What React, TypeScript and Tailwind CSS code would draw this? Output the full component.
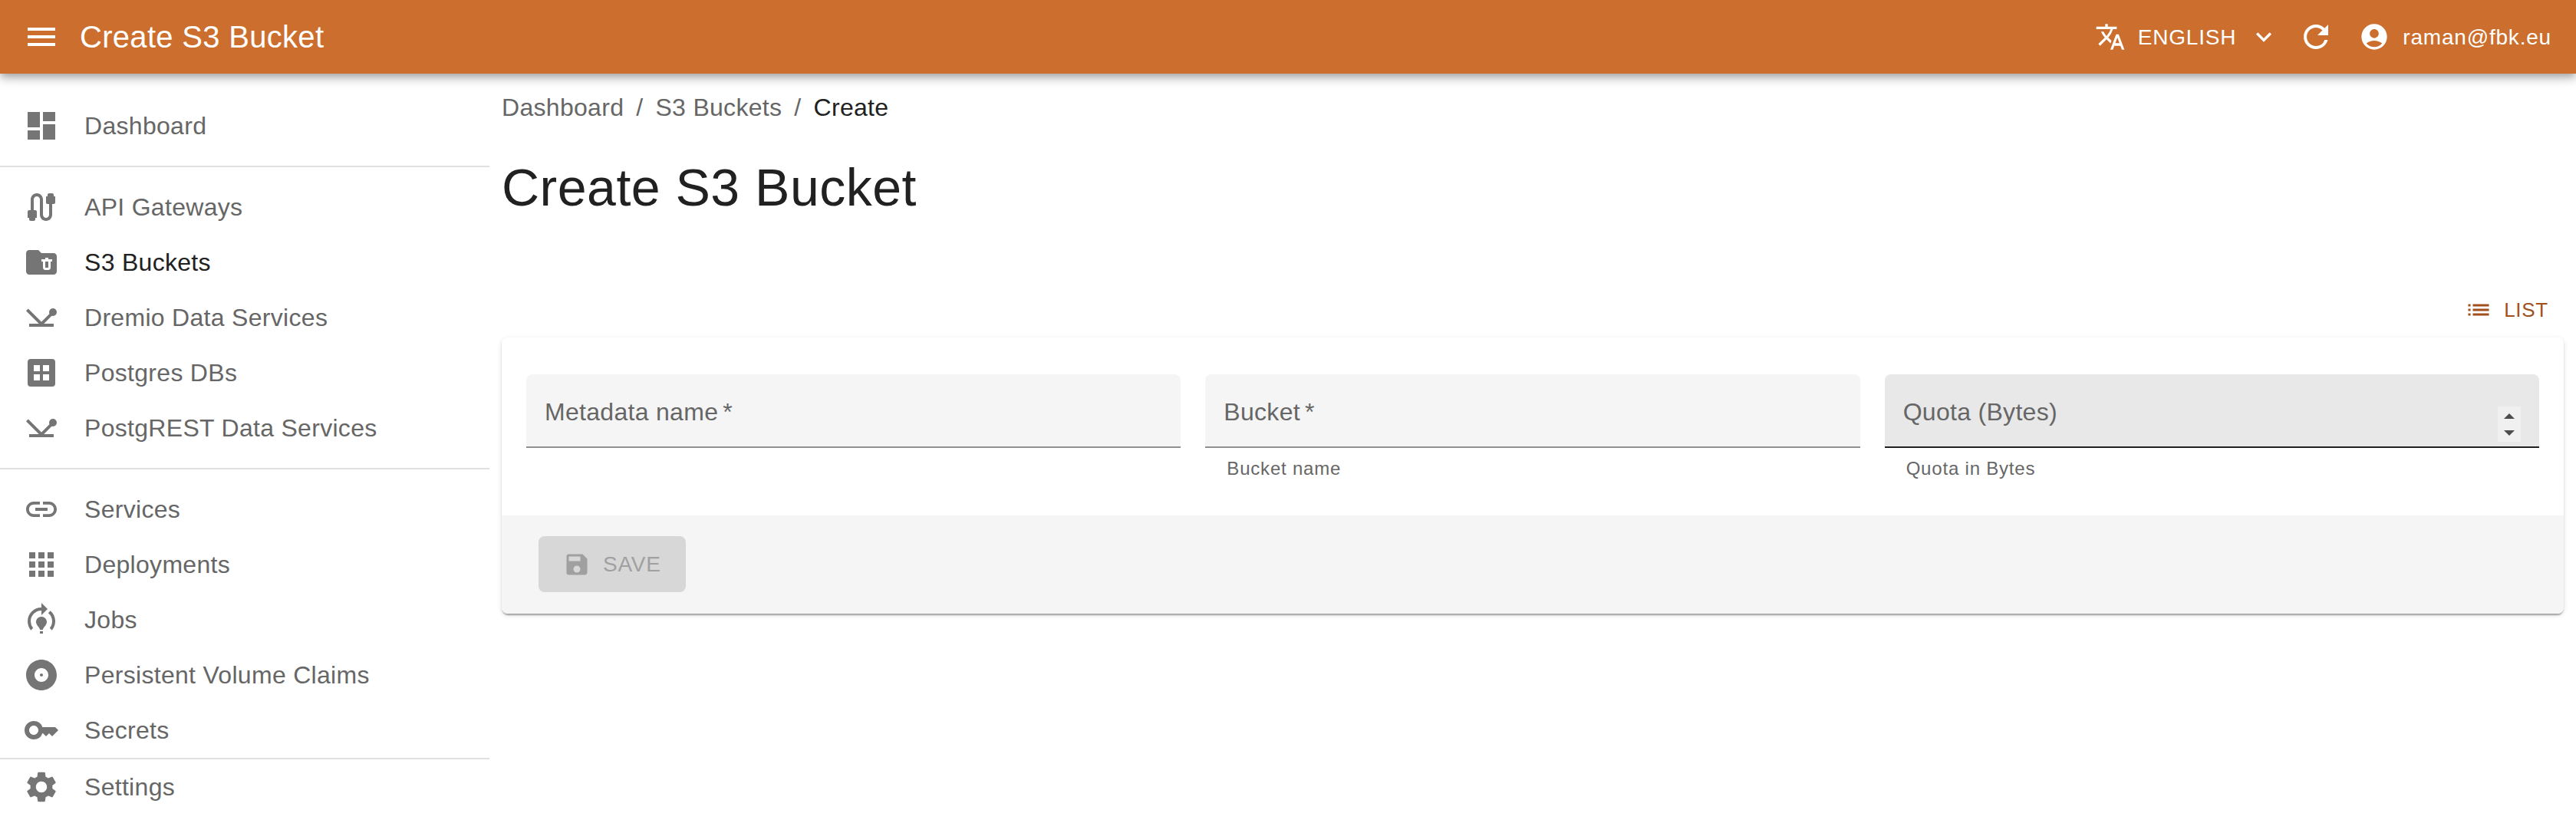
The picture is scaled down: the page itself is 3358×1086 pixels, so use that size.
import type { ComponentType, ReactNode } from 'react';
import {
  MdAccountCircle,
  MdAlbum,
  MdApps,
  MdCable,
  MdDashboard,
  MdExpandMore,
  MdFolderDelete,
  MdKey,
  MdLink,
  MdList,
  MdMenu,
  MdModelTraining,
  MdRefresh,
  MdSave,
  MdSettings,
  MdTranslate,
} from 'react-icons/md';

type Icon = ComponentType<{ className?: string }>;

const DataServiceIcon: Icon = ({ className }) => (
  <svg viewBox="0 0 24 24" fill="none" stroke="currentColor" strokeWidth="2" className={className}>
    <path d="M2.7 6.9 12 16.2l7-7" />
    <path d="M4 17h16" />
    <circle cx="19.5" cy="8.5" r="2.5" fill="currentColor" stroke="none" />
  </svg>
);

const DatabaseIcon: Icon = ({ className }) => (
  <svg viewBox="0 0 24 24" fill="currentColor" fillRule="evenodd" className={className}>
    <path d="M5 3h14a2 2 0 0 1 2 2v14a2 2 0 0 1-2 2H5a2 2 0 0 1-2-2V5a2 2 0 0 1 2-2zM7 7v4h4V7zM13 7v4h4V7zM7 13v4h4v-4zM13 13v4h4v-4z" />
  </svg>
);

function MenuItem({ icon: I, label, active }: { icon: Icon; label: string; active?: boolean }) {
  return (
    <a className={`flex h-[72px] items-center pl-[30px] ${active ? 'text-[#212121]' : 'text-[#666666]'}`}>
      <I className="size-12 shrink-0 text-[#757575]" />
      <span className="ml-8">{label}</span>
    </a>
  );
}

function Group({ children }: { children: ReactNode }) {
  return <div className="flex flex-col">{children}</div>;
}

function Field({ label, required, helper, active }: { label: string; required?: boolean; helper?: string; active?: boolean }) {
  return (
    <div className="flex-1">
      <div
        className={`flex h-24 items-center justify-between rounded-t-lg border-b-2 px-6 ${
          active ? 'border-[#212121] bg-[#e8e8e8]' : 'border-[#8f8f8f] bg-[#f5f5f5]'
        }`}
      >
        <label className="pt-1 text-[#666666]">
          {label}
          {required && <span className="ml-[6px]">*</span>}
        </label>
        {active && (
          <span className="mt-[36px] flex h-[46px] w-[30px] flex-col items-center justify-between bg-[#f0f0f0] pt-[9px] pb-2 text-[#4d4d4d]">
            <svg viewBox="0 0 14 7" className="h-[7px] w-[14px]" fill="currentColor"><path d="M7 0l7 7H0z" /></svg>
            <svg viewBox="0 0 14 7" className="h-[7px] w-[14px]" fill="currentColor"><path d="M0 0h14L7 7z" /></svg>
          </span>
        )}
      </div>
      {helper && <p className="ml-7 mt-[7px] text-2xl leading-10 tracking-[0.8px] text-[#666666]">{helper}</p>}
    </div>
  );
}

export default function App() {
  return (
    <div className="flex h-[1086px] flex-col overflow-hidden bg-white font-['Liberation_Sans',Arial,sans-serif] text-[32px] leading-[48px] tracking-[0.3px]">
      <header className="relative z-10 flex h-24 shrink-0 items-center bg-[#cc6f2e] pl-[30px] text-white shadow-[0_4px_8px_-2px_rgba(0,0,0,0.2),0_8px_10px_0_rgba(0,0,0,0.14),0_2px_20px_0_rgba(0,0,0,0.12)]">
        <MdMenu className="size-12" />
        <span className="ml-[26px] text-[40px]">Create S3 Bucket</span>
        <div className="ml-auto flex items-center pr-8 text-[28px] tracking-[0.8px]">
          <MdTranslate className="size-10" />
          <span className="ml-4 pt-px">ENGLISH</span>
          <MdExpandMore className="ml-4 size-10" />
          <MdRefresh className="ml-6 size-12" />
          <MdAccountCircle className="ml-8 size-10" />
          <span className="ml-[17px] pt-px">raman@fbk.eu</span>
        </div>
      </header>
      <div className="flex flex-1">
        <nav className="flex w-[638px] shrink-0 flex-col pt-8">
          <Group>
            <MenuItem icon={MdDashboard} label="Dashboard" />
          </Group>
          <hr className="my-4 border-t-2 border-[#e0e0e0]" />
          <Group>
            <MenuItem icon={MdCable} label="API Gateways" />
            <MenuItem icon={MdFolderDelete} label="S3 Buckets" active />
            <MenuItem icon={DataServiceIcon} label="Dremio Data Services" />
            <MenuItem icon={DatabaseIcon} label="Postgres DBs" />
            <MenuItem icon={DataServiceIcon} label="PostgREST Data Services" />
          </Group>
          <hr className="my-4 border-t-2 border-[#e0e0e0]" />
          <Group>
            <MenuItem icon={MdLink} label="Services" />
            <MenuItem icon={MdApps} label="Deployments" />
            <MenuItem icon={MdModelTraining} label="Jobs" />
            <MenuItem icon={MdAlbum} label="Persistent Volume Claims" />
            <MenuItem icon={MdKey} label="Secrets" />
          </Group>
          <hr className="border-t-2 border-[#e0e0e0]" />
          <MenuItem icon={MdSettings} label="Settings" />
        </nav>
        <main className="mx-4 flex flex-1 flex-col">
          <div className="mt-5 flex gap-4 text-[#666666]">
            <span>Dashboard</span>
            <span>/</span>
            <span>S3 Buckets</span>
            <span>/</span>
            <span className="text-[#212121]">Create</span>
          </div>
          <h1 className="mt-[38px] text-[68px] leading-[84px] tracking-[0.5px] text-[#212121]">Create S3 Bucket</h1>
          <div className="mt-[90px] flex h-[56px] items-center justify-end pr-5 text-[26px] tracking-[0.74px] text-[#a0501c]">
            <MdList className="size-9" />
            <span className="ml-[15px]">LIST</span>
          </div>
          <section className="mt-2 h-[360px] overflow-hidden rounded-lg bg-white shadow-[0_4px_2px_-2px_rgba(0,0,0,0.2),0_2px_2px_0_rgba(0,0,0,0.14),0_2px_6px_0_rgba(0,0,0,0.12)]">
            <div className="flex h-[232px] gap-8 px-8 pt-12">
              <Field label="Metadata name" required />
              <Field label="Bucket" required helper="Bucket name" />
              <Field label="Quota (Bytes)" helper="Quota in Bytes" active />
            </div>
            <div className="flex h-32 items-center bg-[#f5f5f5] px-12 pb-px">
              <button className="flex h-[73px] w-[192px] items-center rounded-lg bg-[#d7d7d7] pl-8 text-[28px] tracking-[0.8px] text-[#a0a0a0]">
                <MdSave className="size-9" />
                <span className="ml-4">SAVE</span>
              </button>
            </div>
          </section>
        </main>
      </div>
    </div>
  );
}
